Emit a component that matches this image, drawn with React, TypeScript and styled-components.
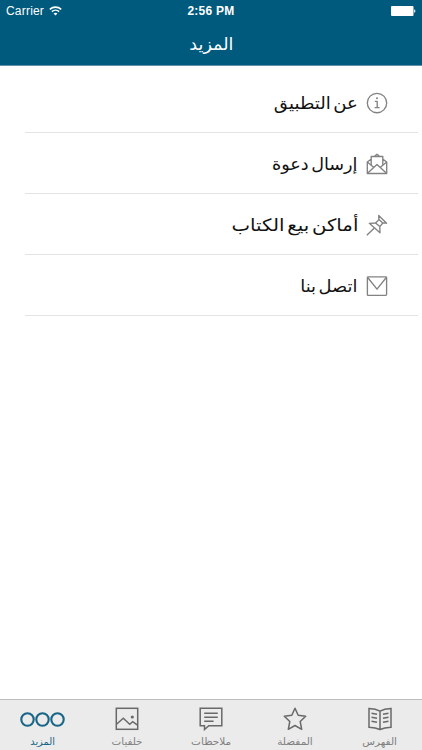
import React from "react";
import styled, { createGlobalStyle } from "styled-components";

const GlobalStyle = createGlobalStyle`
  * { box-sizing: border-box; }
  body { margin: 0; background: #fff; }
`;

const arabic = `"DejaVu Sans", sans-serif`;

const Screen = styled.div`
  width: 422px;
  height: 750px;
  display: flex;
  flex-direction: column;
  background: #fff;
  overflow: hidden;
`;

const Header = styled.header`
  height: 66px;
  flex: none;
  background: #005a7d;
  border-bottom: 1px solid #5e94ab;
  color: #fff;
`;

const StatusBar = styled.div`
  height: 22px;
  padding: 0 6px 0 6px;
  display: grid;
  grid-template-columns: 1fr auto 1fr;
  align-items: center;
  font: 12px/22px "Liberation Sans", Arial, sans-serif;
`;

const Carrier = styled.div`
  display: flex;
  align-items: center;
  gap: 5px;
  letter-spacing: 0.2px;
`;

const Clock = styled.div`
  font-weight: 700;
  font-size: 12px;
  letter-spacing: 0.25px;
`;

const Battery = styled.div`
  justify-self: end;
  display: flex;
  align-items: center;
`;

const Title = styled.h1`
  margin: 0;
  height: 43px;
  display: flex;
  align-items: center;
  justify-content: center;
  direction: rtl;
  font: 400 17px/24px ${arabic};
`;

const Fitted = styled.span<{ $scale: number; $origin?: string }>`
  display: inline-block;
  white-space: nowrap;
  transform: scaleX(${(p) => p.$scale});
  transform-origin: ${(p) => p.$origin ?? "center"};
`;

const List = styled.ul`
  margin: 6px 4px 0 25px;
  padding: 0;
  list-style: none;
  flex: 1;
  direction: rtl;
`;

const Row = styled.li`
  height: 61px;
  padding: 2px 30px 0 0;
  display: flex;
  align-items: center;
  gap: 8px;
  border-bottom: 1px solid #e3e3e3;
  color: #111;
  font: 17px/24px ${arabic};
  word-spacing: -3px;
`;

const RowIcon = styled.svg`
  width: 22px;
  height: 22px;
  flex: none;
  fill: none;
  stroke: #828282;
  stroke-width: 1.35;
  stroke-linejoin: round;
`;

const TabBar = styled.nav`
  height: 51px;
  flex: none;
  display: grid;
  grid-template-columns: repeat(5, 1fr);
  background: #ebebeb;
  border-top: 1px solid #bdbdbd;
`;

const Tab = styled.div<{ $active?: boolean }>`
  display: flex;
  flex-direction: column;
  align-items: center;
  padding-top: 7px;
  color: ${(p) => (p.$active ? "#176587" : "#696969")};
  font: 10px/14px ${arabic};
  direction: rtl;
`;

const TabLabel = styled.div<{ $active?: boolean }>`
  margin-top: 4px;
  color: ${(p) => (p.$active ? "#176587" : "#808080")};
`;

const TabIcon = styled.svg`
  height: 24px;
  flex: none;
  fill: none;
  stroke: currentColor;
  stroke-width: 1.5;
`;

const rows = [
  {
    label: "عن التطبيق",
    scale: 1.065,
    icon: (
      <>
        <circle cx="11" cy="11" r="9.7" />
        <path d="M8.8 9.3h2.4v6.2M8.6 15.6h5" />
        <circle cx="11" cy="6.3" r="1" fill="#828282" stroke="none" />
      </>
    ),
  },
  {
    label: "إرسال دعوة",
    scale: 1.037,
    icon: (
      <>
        <path d="M5 6.2 1.3 9v11.5h19.4V9L17 6.2M8.5 3.2 11 1.2l2.5 2M5.2 12V3.5h11.6V12" />
        <path d="m1.3 9 6.3 5.3M20.7 9l-6.3 5.3M1.5 20.3 11 11.5l9.5 8.800" />
      </>
    ),
  },
  {
    label: "أماكن بيع الكتاب",
    scale: 1.16,
    icon: (
      <>
        <path d="M12.700 1.500 20.600 9.200 16.800 9 13.800 12.600 14 18.800 3.300 9.300 9.600 9 12.900 5.600Z" />
        <path d="M12.900 5.600 16.800 9M9.600 9l4.200 3.600M8.400 14 .8 21.200" />
      </>
    ),
  },
  {
    label: "اتصل بنا",
    scale: 1.05,
    icon: (
      <>
        <rect x="1.400" y="1.800" width="19.200" height="18.600" rx="0.800" />
        <path d="m1.700 2.500 9.300 11.700 9.300-11.700" />
      </>
    ),
  },
];

const tabs = [
  {
    label: "المزيد",
    scale: 0.98,
    width: 46,
    active: true,
    icon: (
      <g strokeWidth="2.100">
        <circle cx="8.500" cy="12.500" r="6.200" />
        <circle cx="23.500" cy="12.500" r="6.200" />
        <circle cx="38.500" cy="12.500" r="6.200" />
      </g>
    ),
  },
  {
    label: "خلفيات",
    scale: 1.03,
    width: 24,
    icon: (
      <>
        <rect x="1.300" y="1.300" width="21.400" height="21" />
        <path d="m1.500 17.200 6.800-6 6.400 6 3-2.600 4.800 3.600" />
        <circle cx="17.300" cy="10" r="1.600" fill="currentColor" stroke="none" />
      </>
    ),
  },
  {
    label: "ملاحظات",
    scale: 1.05,
    width: 24,
    icon: (
      <path d="M1.200 1.300h21.600v17.400H9.800L5.500 22.500v-3.800H1.200ZM5.200 6.200h13.600M5.200 10.200h13.600M5.200 14.200h9.400" />
    ),
  },
  {
    label: "المفضلة",
    scale: 1.045,
    width: 24,
    icon: (
      <path
        strokeLinejoin="round"
        d="m12 1.300 3.200 7 7.500.9-5.500 5.300 1.500 7.800-6.700-3.800-6.700 3.800 1.500-7.800L1.300 9.200l7.500-.9Z"
      />
    ),
  },
  {
    label: "الفهرس",
    scale: 1.045,
    width: 24,
    icon: (
      <>
        <path d="M12 4.200v18.300M12 4.200C8.800 2.400 5 1.700 1 1.500v18.700c4 .1 7.800.700 11 2.300 3.200-1.600 7-2.200 11-2.300V1.500c-4 .2-7.800.9-11 2.700Z" />
        <path d="M3.500 6.200l5.500 1M3.500 10.200l5.500 1M3.500 14.200l5.500 1M20.500 6.200l-5.500 1M20.500 10.200l-5.500 1M20.500 14.200l-5.500 1" />
      </>
    ),
  },
];

export default function App() {
  return (
    <Screen>
      <GlobalStyle />
      <Header>
        <StatusBar>
          <Carrier>
            Carrier
            <svg width="13" height="10" viewBox="0 0 13 10" fill="none" stroke="#fff" strokeWidth="1.600">
              <path d="M.8 3.400c3.200-3 8.200-3 11.400 0M2.900 5.700c2-1.900 5.200-1.900 7.200 0" />
              <path d="M4.600 7.400c1.100-1 2.700-1 3.800 0L6.500 9.400Z" fill="#fff" stroke="none" />
            </svg>
          </Carrier>
          <Clock>2:56 PM</Clock>
          <Battery>
            <svg width="25" height="10" viewBox="0 0 25 10" fill="#fff">
              <rect width="22.500" height="10" rx="1" />
              <path d="M23.200 3.200c1.600.4 1.600 3.200 0 3.600Z" />
            </svg>
          </Battery>
        </StatusBar>
        <Title>
          <Fitted $scale={1.03}>المزيد</Fitted>
        </Title>
      </Header>
      <List>
        {rows.map((row) => (
          <Row key={row.label}>
            <RowIcon viewBox="0 0 22 22">{row.icon}</RowIcon>
            <Fitted $scale={row.scale} $origin="right">
              {row.label}
            </Fitted>
          </Row>
        ))}
      </List>
      <TabBar>
        {tabs.map((tab) => (
          <Tab key={tab.label} $active={tab.active}>
            <TabIcon width={tab.width} viewBox={`0 0 ${tab.width} 24`}>
              {tab.icon}
            </TabIcon>
            <TabLabel $active={tab.active}>
              <Fitted $scale={tab.scale}>{tab.label}</Fitted>
            </TabLabel>
          </Tab>
        ))}
      </TabBar>
    </Screen>
  );
}
